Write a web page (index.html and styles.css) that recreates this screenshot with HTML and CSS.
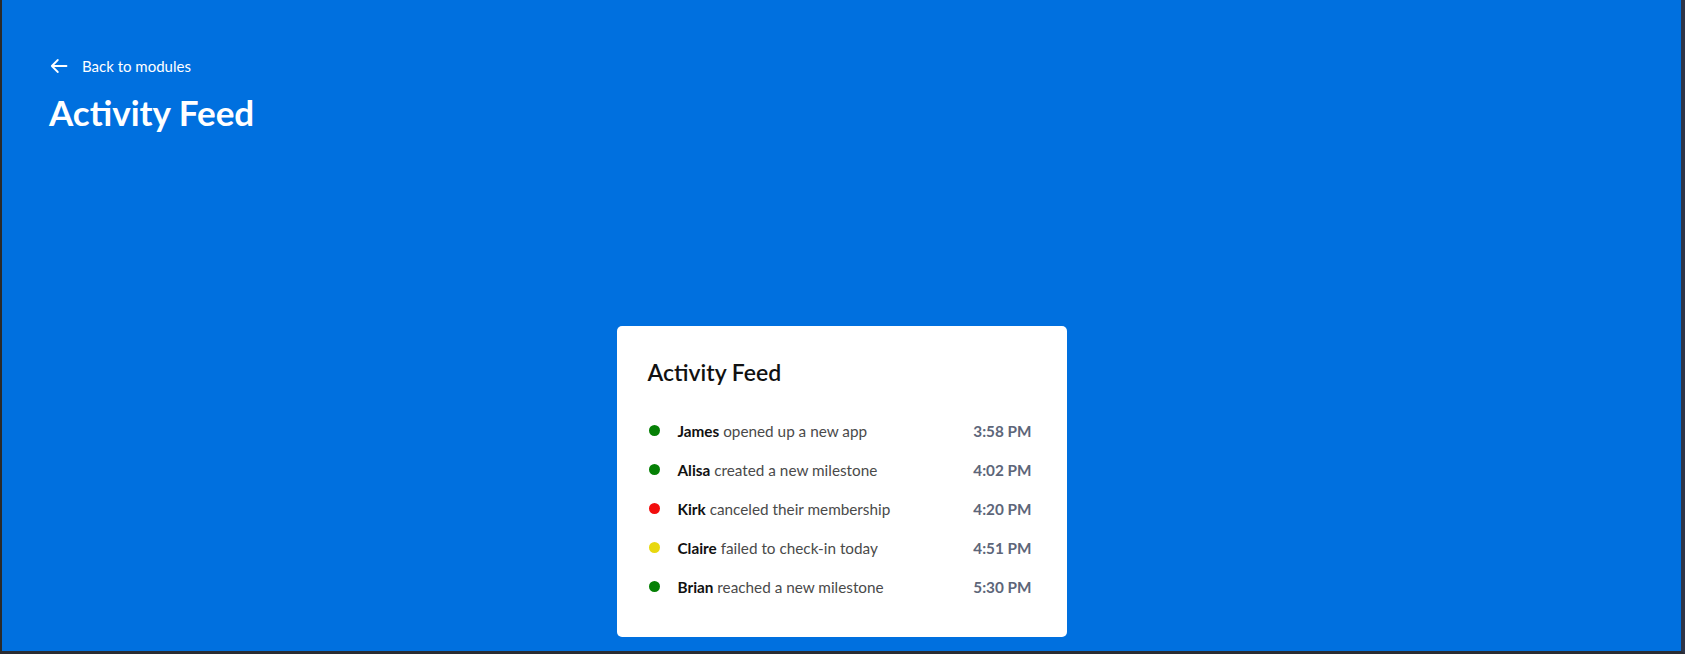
FILE: index.html
```html
<!DOCTYPE html>
<html lang="en">
<head>
<meta charset="utf-8">
<title>Activity Feed</title>
<link rel="stylesheet" href="styles.css">
</head>
<body>
<div class="frame">
  <header class="header">
    <a class="back" href="#">
      <svg class="back-icon" width="18" height="16" viewBox="0 0 18 16" fill="none" stroke="#fff" stroke-width="1.8" stroke-linecap="round" stroke-linejoin="round"><path d="M16.5 8H1.8M7.8 2L1.8 8l6 6"/></svg>
      <span>Back to modules</span>
    </a>
    <h1 class="page-title">Activity Feed</h1>
  </header>
  <main class="main">
    <section class="card">
      <h2 class="card-title">Activity Feed</h2>
      <ul class="feed">
        <li class="item"><span class="dot dot-green"></span><span class="text"><b>James</b> opened up a new app</span><span class="time">3:58 PM</span></li>
        <li class="item"><span class="dot dot-green"></span><span class="text"><b>Alisa</b> created a new milestone</span><span class="time">4:02 PM</span></li>
        <li class="item"><span class="dot dot-red"></span><span class="text"><b>Kirk</b> canceled their membership</span><span class="time">4:20 PM</span></li>
        <li class="item"><span class="dot dot-yellow"></span><span class="text"><b>Claire</b> failed to check-in today</span><span class="time">4:51 PM</span></li>
        <li class="item"><span class="dot dot-green"></span><span class="text"><b>Brian</b> reached a new milestone</span><span class="time">5:30 PM</span></li>
      </ul>
    </section>
  </main>
</div>
</body>
</html>
```

FILE: styles.css
```css
html, body {
  margin: 0;
  padding: 0;
}
body {
  font-family: "Lato", "Noto Sans", "Liberation Sans", sans-serif;
  background: #2b2b2b;
}
.frame {
  box-sizing: border-box;
  width: 1685px;
  height: 654px;
  background: #0070df;
  border-left: 2px solid #2a2a2a;
  border-right: 4px solid #2e3548;
  border-bottom: 3px solid #2a2c33;
  display: flex;
  flex-direction: column;
  overflow: hidden;
}
.header {
  padding: 56px 0 0 47px;
}
.back {
  display: flex;
  align-items: center;
  gap: 14px;
  height: 20px;
  color: #fff;
  text-decoration: none;
  font-size: 15px;
  line-height: 20px;
  padding-left: 1px;
}
.back-icon {
  display: block;
}
.page-title {
  margin: 16px 0 0 0;
  color: #fff;
  font-size: 35px;
  line-height: 40px;
  font-weight: 700;
}
.main {
  display: flex;
  justify-content: center;
  padding-top: 194px;
}
.card {
  box-sizing: border-box;
  width: 450px;
  height: 311px;
  background: #fff;
  border-radius: 5px;
  padding: 32px 35px 30px 31px;
}
.card-title {
  margin: 0;
  font-size: 23px;
  line-height: 28px;
  font-weight: 600;
  color: #111;
}
.feed {
  list-style: none;
  margin: 25px 0 0 0;
  padding: 0;
}
.item {
  display: flex;
  align-items: center;
  height: 39px;
  font-size: 15.3px;
}
.dot {
  width: 11px;
  height: 11px;
  border-radius: 50%;
  margin-left: 1px;
  margin-right: 18px;
  flex: none;
}
.dot-green { background: #058005; }
.dot-red { background: #f20d0d; }
.dot-yellow { background: #e8d80f; }
.text {
  color: #4a4a4a;
}
.text b {
  color: #111;
  font-weight: 700;
}
.time {
  margin-left: auto;
  color: #5d6679;
  font-weight: 700;
}
```
